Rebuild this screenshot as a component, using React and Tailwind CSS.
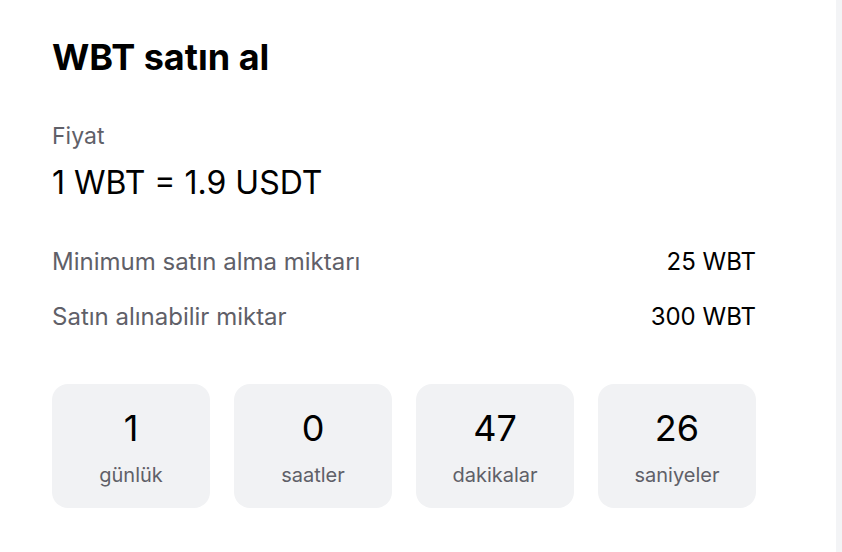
import React from 'react';

const countdown = [
  { value: '1', label: 'günlük' },
  { value: '0', label: 'saatler' },
  { value: '47', label: 'dakikalar' },
  { value: '26', label: 'saniyeler' },
];

export default function App() {
  return (
    <div className="flex h-[552px] w-[842px] bg-[#f3f4f6] font-['Inter',sans-serif]">
      <div className="w-[836px] bg-white pl-[52px] pt-[35px]">
        <div className="w-[704px]">
          <h1 className="text-[36px] font-bold leading-[44px] text-black">WBT satın al</h1>

          <div className="mt-[42px] text-[23px] leading-[30px] text-[#5f6068]">Fiyat</div>
          <div className="mt-[14px] text-[32px] leading-[36px] text-black">1 WBT = 1.9 USDT</div>

          <div className="mt-[46px] flex flex-col gap-[25px]">
            <div className="flex items-center justify-between text-[24px] leading-[30px]">
              <span className="text-[#5f6068]">Minimum satın alma miktarı</span>
              <span className="text-black">25 WBT</span>
            </div>
            <div className="flex items-center justify-between text-[24px] leading-[30px]">
              <span className="text-[#5f6068]">Satın alınabilir miktar</span>
              <span className="text-black">300 WBT</span>
            </div>
          </div>

          <div className="mt-[52px] grid grid-cols-4 gap-[24px]">
            {countdown.map((c) => (
              <div
                key={c.label}
                className="flex h-[124px] flex-col items-center rounded-[16px] bg-[#f1f2f4] pt-[22px]"
              >
                <div className="text-[36px] leading-[44px] text-black">{c.value}</div>
                <div className="mt-[12px] text-[20px] leading-[26px] text-[#5f6068]">{c.label}</div>
              </div>
            ))}
          </div>
        </div>
      </div>
    </div>
  );
}
